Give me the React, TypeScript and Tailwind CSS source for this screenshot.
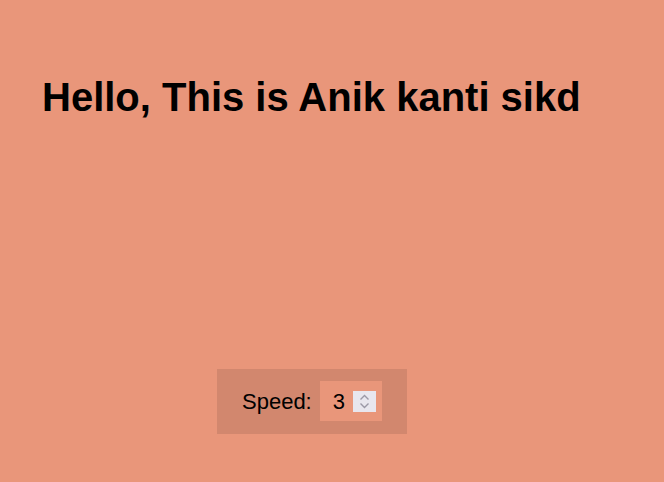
import React from 'react';

const Spinner: React.FC = () => (
  <div className="w-[23px] h-[21px] bg-[#e8e6ee] flex items-center justify-center">
    <svg width="11" height="15" viewBox="0 0 11 15" fill="none" stroke="#9b98a6" strokeWidth="1.4">
      <path d="M1.5 5.5 L5.5 1.5 L9.5 5.5" />
      <path d="M1.5 9.5 L5.5 13.5 L9.5 9.5" />
    </svg>
  </div>
);

const App: React.FC = () => (
  <div className="min-h-[482px] w-full bg-[#e9967a] font-['Liberation_Sans',Arial,sans-serif] text-black">
    <h1 className="pl-[42px] pt-[74px] text-[40px] leading-[46px] font-bold">Hello, This is Anik kanti sikd</h1>
    <div className="mt-[249px] ml-[217px] w-fit flex items-center bg-[#d2876e] pl-[25px] pr-[25px] pt-[12px] pb-[13px]">
      <label htmlFor="speed" className="text-[22px] leading-[26px] mr-[8px] pt-[2px]">Speed:</label>
      <div className="w-[62px] h-[40px] bg-[#e9967a] flex items-center pl-[13px] pr-[6px]">
        <input
          id="speed"
          type="number"
          defaultValue={3}
          className="w-[20px] bg-transparent text-[22px] leading-[26px] pt-[2px] outline-none border-0 p-0 [appearance:textfield] [&::-webkit-inner-spin-button]:appearance-none [&::-webkit-outer-spin-button]:appearance-none"
        />
        <div className="ml-auto">
          <Spinner />
        </div>
      </div>
    </div>
  </div>
);

export default App;
